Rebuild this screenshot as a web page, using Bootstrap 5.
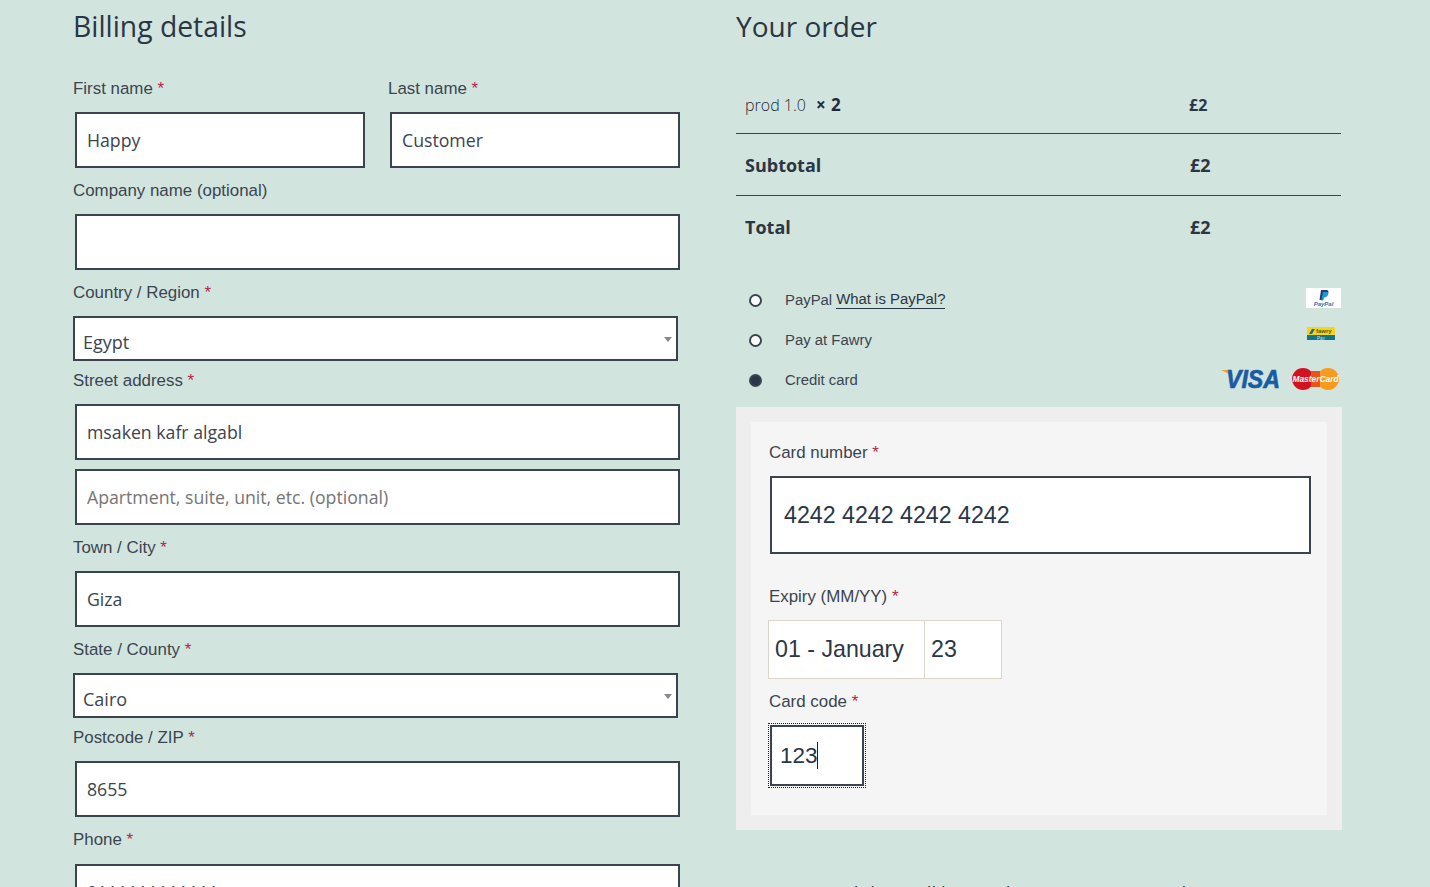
<!DOCTYPE html>
<html lang="en">
<head>
    <meta charset="UTF-8">
    <meta name="viewport" content="width=device-width, initial-scale=1.0">
    <title>Checkout</title>
    <link href="https://cdn.jsdelivr.net/npm/bootstrap@5.3.0/dist/css/bootstrap.min.css" rel="stylesheet">
    <style>
        html, body { height: 887px; overflow: hidden; }
        body { background: #d2e4de; color: #333c48; font-family: "Liberation Sans", Arial, sans-serif; }
        .page-wrap { display: flex; gap: 56px; padding: 0 88px 0 73px; }
        .side-col { width: 607px; flex: none; }
        .side-col h3 { font-family: "Open Sans", sans-serif; font-size: 28.3px; font-weight: 400; line-height: 40px; margin: 6px 0 0; color: #2b3644; }
        .side-col h3.order-head { font-size: 28px; }
        .billing-form { padding-top: 31px; }
        .name-cell { width: 292px; }
        .name-cell + .name-cell { margin-left: 23px; }
        .fld-label { display: block; font-size: 16.9px; line-height: 24px; margin: 0; color: #3b4450; }
        .fld-label b { color: #b5254a; font-weight: 400; }
        .fld { display: block; width: 100%; height: 56px; border: 2px solid #3a434f; border-radius: 0; background: #fff; padding: 0 10px; font-family: "Open Sans", sans-serif; font-size: 17.7px; color: #3b4450; outline: none; }
        .fld::placeholder { color: #757575; opacity: 1; }
        .fld-wrap { padding: 11px 0 11px 2px; }
        .fld-wrap.tight { padding-bottom: 9px; }
        .fld-wrap.flush { padding-top: 0; }
        .fld-wrap.phone { padding-top: 12px; }
        .pick { position: relative; height: 45px; width: 605px; border: 2px solid #3a434f; background: #fff; font-family: "Open Sans", sans-serif; font-size: 18px; padding: 10px 8px 0; line-height: 28px; color: #3b4450; }
        .pick::after { content: ""; position: absolute; right: 4px; top: 19px; border: 4px solid transparent; border-top: 5px solid #888; border-bottom: 0; }
        .pick-wrap { padding: 11px 0 8px; }
        .order-tbl { margin-top: 29px; width: 605px; }
        .order-row { display: flex; align-items: center; height: 62px; border-bottom: 1px solid #3a434f; font-family: "Open Sans", sans-serif; padding: 1px 0 0 9px; }
        .order-row:last-child { border-bottom: 0; height: 63px; padding-top: 0; }
        .order-row > span:first-child { width: 445px; flex: none; font-size: 18px; font-weight: 700; color: #2b3644; }
        .order-row > span:last-child { font-size: 18px; font-weight: 700; color: #2b3644; }
        .order-row.item { height: 59px; }
        .order-row.item > span:first-child { width: 444px; font-size: 16px; font-weight: 300; color: #1f2a38; }
        .order-row.item > span:last-child { font-size: 16px; }
        .order-row.item strong { font-size: 17px; font-weight: 700; margin-left: 10px; word-spacing: 1px; }
        .pay-list { margin-top: 21px; width: 605px; }
        .pay-row { display: flex; align-items: center; height: 40px; font-size: 14.9px; color: #3b4450; }
        .pay-dot { width: 13px; height: 13px; border: 2px solid #3a434f; border-radius: 50%; background: #fff; margin: 0 23px 0 13px; flex: none; }
        .pay-dot.on { background: #2c3648; border-color: #3a434f; }
        .pay-row a { color: #2b3644; text-decoration: none; border-bottom: 1px solid #2b3644; margin-left: 4px; line-height: 17px; }
        .pay-art { margin-left: auto; display: flex; align-items: center; }
        .art-paypal { margin-bottom: 4px; }
        .art-fawry { margin: 0 6px 13px 0; }
        .art-visa { margin: 0 10px 3px 0; }
        .art-mc { margin: 0 1px 3px 0; }
        .card-outer { background: #eeeeee; padding: 15px; width: 606px; margin-top: 7px; }
        .card-inner { background: #f5f5f5; padding: 19px 16px 27px 17px; height: 393px; }
        .card-inner .fld-label { padding-left: 1px; }
        .num-fld { display: block; width: 541px; height: 78px; margin: 11px 0 31px 2px; border: 2px solid #3a434f; background: #fff; padding: 0 12px; font-size: 23.2px; color: #2b3644; outline: none; border-radius: 0; }
        .exp-boxes { display: flex; margin: 11px 0 11px; }
        .exp-box { height: 59px; border: 1px solid #ddd6c8; background: #fff; font-size: 23.2px; line-height: 57px; padding-left: 6px; color: #2b3644; }
        .exp-box.mon { width: 157px; }
        .exp-box.yr { width: 78px; margin-left: -1px; }
        .code-ring { width: 98px; height: 65px; margin-top: 9px; border: 1px dotted #222; padding: 1px; }
        .code-box { height: 61px; border: 2px solid #3a434f; background: #fff; font-size: 22.5px; line-height: 57px; padding-left: 8px; color: #2b3644; }
        .caret-bar { display: inline-block; width: 1px; height: 27px; background: #222; vertical-align: -6px; margin-left: -1px; }
        .tail-note { margin: 50px 0 0; font-family: "Open Sans", sans-serif; font-size: 18.8px; line-height: 26px; white-space: nowrap; }
    </style>
</head>
<body>
    <div class="page-wrap">
        <!-- Billing -->
        <div class="side-col">
            <h3>Billing details</h3>
            <div class="billing-form">
                <div class="d-flex">
                    <div class="name-cell">
                        <label class="fld-label">First name <b>*</b></label>
                        <div class="fld-wrap"><input class="fld" value="Happy"></div>
                    </div>
                    <div class="name-cell">
                        <label class="fld-label">Last name <b>*</b></label>
                        <div class="fld-wrap"><input class="fld" value="Customer"></div>
                    </div>
                </div>
                <label class="fld-label">Company name (optional)</label>
                <div class="fld-wrap"><input class="fld"></div>
                <label class="fld-label">Country / Region <b>*</b></label>
                <div class="pick-wrap"><div class="pick">Egypt</div></div>
                <label class="fld-label">Street address <b>*</b></label>
                <div class="fld-wrap tight"><input class="fld" value="msaken kafr algabl"></div>
                <div class="fld-wrap flush"><input class="fld" placeholder="Apartment, suite, unit, etc. (optional)"></div>
                <label class="fld-label">Town / City <b>*</b></label>
                <div class="fld-wrap"><input class="fld" value="Giza"></div>
                <label class="fld-label">State / County <b>*</b></label>
                <div class="pick-wrap"><div class="pick">Cairo</div></div>
                <label class="fld-label">Postcode / ZIP <b>*</b></label>
                <div class="fld-wrap"><input class="fld" value="8655"></div>
                <label class="fld-label">Phone <b>*</b></label>
                <div class="fld-wrap phone"><input class="fld" value="0111111111111"></div>
            </div>
        </div>

        <!-- Order -->
        <div class="side-col">
            <h3 class="order-head">Your order</h3>
            <div class="order-tbl">
                <div class="order-row item"><span>prod 1.0<strong>× 2</strong></span><span>£2</span></div>
                <div class="order-row"><span>Subtotal</span><span>£2</span></div>
                <div class="order-row"><span>Total</span><span>£2</span></div>
            </div>
            <div class="pay-list">
                <div class="pay-row"><span class="pay-dot"></span>PayPal <a href="#">What is PayPal?</a>
                    <span class="pay-art">
                        <svg class="art-paypal" width="35" height="20" viewBox="0 0 35 20"><rect width="35" height="20" fill="#fff"/><path d="M15 2h5c2.500 0 3 2 2 4s-2.500 2.500-4.500 2.500h-1L16 12h-2.500z" fill="#253b80"/><path d="M17 4h4c1.500.5 1.500 2 1 3s-2 2.500-4 2.500l-.6 3H15.500z" fill="#179bd7"/><text x="17.500" y="18" text-anchor="middle" font-family="Liberation Sans" font-size="6" font-style="italic" font-weight="700" fill="#3f6cab">PayPal</text></svg>
                    </span>
                </div>
                <div class="pay-row"><span class="pay-dot"></span>Pay at Fawry
                    <span class="pay-art">
                        <svg class="art-fawry" width="28" height="13" viewBox="0 0 28 13"><rect width="28" height="8" fill="#f6d31c"/><rect y="8" width="28" height="5" fill="#12758f"/><path d="M2 7l3-5h3L5 7z" fill="#12758f"/><text x="9" y="6" font-family="Liberation Sans" font-size="6" font-weight="700" fill="#40602c">fawry</text><text x="14" y="12.500" text-anchor="middle" font-family="Liberation Sans" font-size="4.500" fill="#cfe3e8">Pay</text></svg>
                    </span>
                </div>
                <div class="pay-row"><span class="pay-dot on"></span>Credit card
                    <span class="pay-art">
                        <svg class="art-visa" width="62" height="22" viewBox="0 0 62 22"><path d="M2 2h9l3 6z" fill="#f0a02c"/><text x="7" y="19.500" font-family="Liberation Sans" font-size="25" font-style="italic" font-weight="700" fill="#1a5ca4" stroke="#1a5ca4" stroke-width=".7" textLength="54" lengthAdjust="spacingAndGlyphs">VISA</text></svg>
                        <svg class="art-mc" width="49" height="22" viewBox="0 0 49 22"><circle cx="12" cy="11" r="11" fill="#d3121f"/><circle cx="37" cy="11" r="11" fill="#f79a1e"/><rect x="20" y="3" width="9" height="16" fill="#e8541c"/><text x="24.500" y="14" text-anchor="middle" font-family="Liberation Sans" font-size="8.500" font-style="italic" font-weight="700" fill="#fff" textLength="46" lengthAdjust="spacingAndGlyphs">MasterCard</text></svg>
                    </span>
                </div>
            </div>
            <div class="card-outer">
                <div class="card-inner">
                    <label class="fld-label">Card number <b>*</b></label>
                    <input class="num-fld" value="4242 4242 4242 4242">
                    <label class="fld-label">Expiry (MM/YY) <b>*</b></label>
                    <div class="exp-boxes">
                        <div class="exp-box mon">01 - January</div>
                        <div class="exp-box yr">23</div>
                    </div>
                    <label class="fld-label">Card code <b>*</b></label>
                    <div class="code-ring"><div class="code-box">123<span class="caret-bar"></span></div></div>
                </div>
            </div>
            <p class="tail-note">Your personal data will be used to process your order, support</p>
        </div>
    </div>
    <script src="https://cdn.jsdelivr.net/npm/bootstrap@5.3.0/dist/js/bootstrap.bundle.min.js"></script>
</body>
</html>
